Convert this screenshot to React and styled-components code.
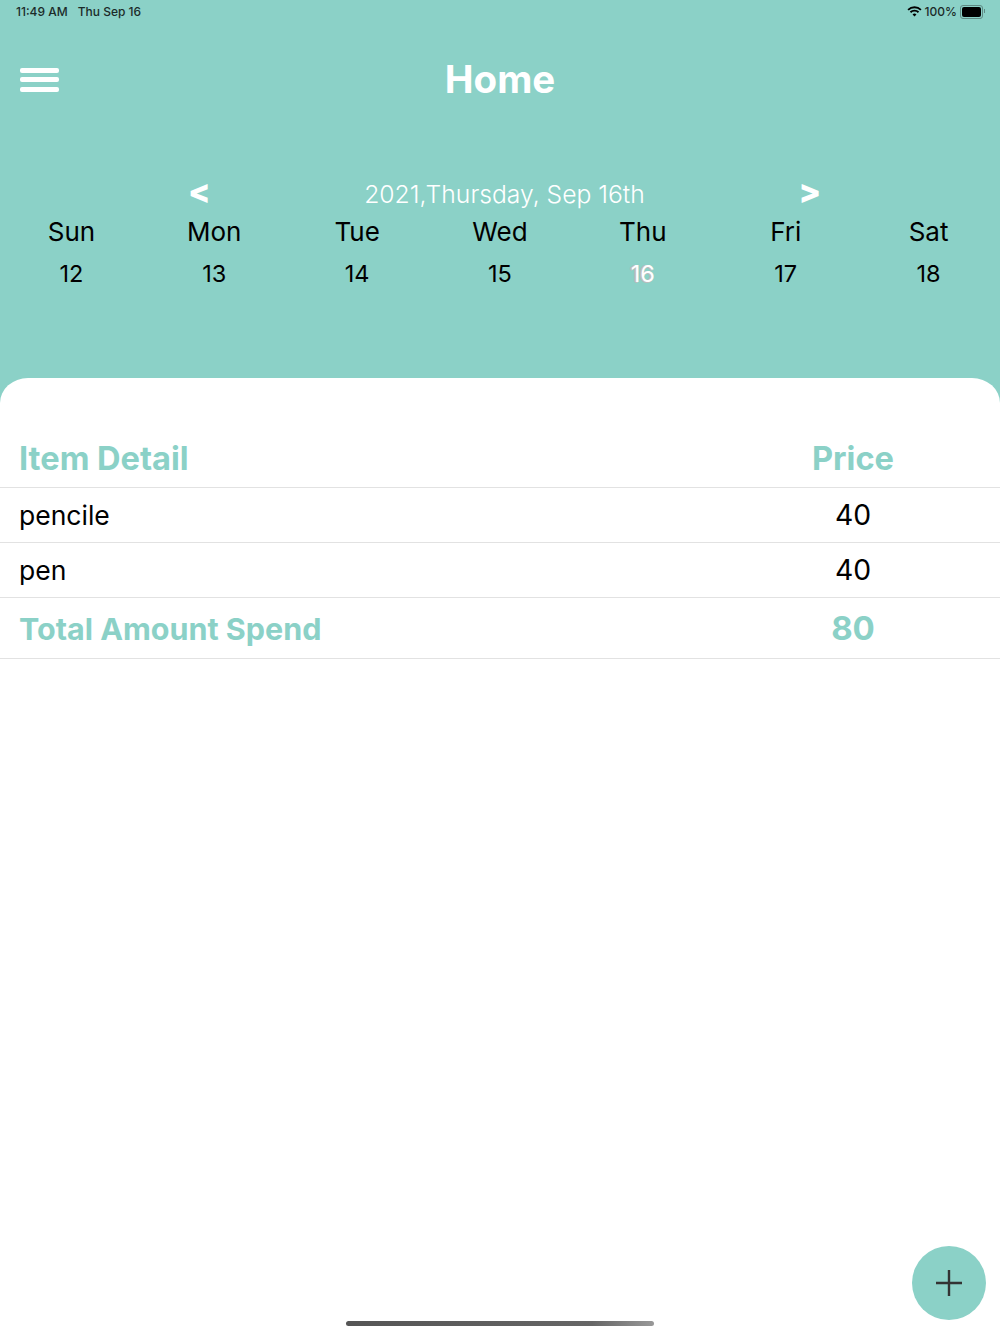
import React from "react";
import styled, { createGlobalStyle } from "styled-components";

const TEAL = "#8bd1c7";

const GlobalStyle = createGlobalStyle`
  html, body {
    margin: 0;
    padding: 0;
    background: ${TEAL};
  }
  body {
    font-family: Inter, "Liberation Sans", sans-serif;
  }
`;

const Page = styled.div`
  position: relative;
  width: 1000px;
  height: 1334px;
  overflow: hidden;
  display: flex;
  flex-direction: column;
  background: ${TEAL};
`;

const StatusBar = styled.div`
  height: 23px;
  padding: 0 16px;
  display: flex;
  align-items: center;
  justify-content: space-between;
  font-size: 12px;
  font-weight: 500;
  color: #1c2b29;
`;

const StatusGroup = styled.div`
  display: flex;
  align-items: center;
  gap: ${(props) => props.$gap}px;
`;

const Battery = styled.div`
  position: relative;
  width: 19px;
  height: 10px;
  padding: 1px;
  border: 1px solid #5f8a84;
  border-radius: 3px;
  margin-right: 1px;

  &::before {
    content: "";
    display: block;
    height: 100%;
    background: #000;
    border-radius: 2px;
  }

  &::after {
    content: "";
    position: absolute;
    right: -3px;
    top: 3px;
    width: 1px;
    height: 4px;
    background: #5f8a84;
  }
`;

const Header = styled.header`
  height: 113px;
  padding: 0 20px;
  display: flex;
  align-items: center;
`;

const MenuButton = styled.div`
  width: 39px;
  display: flex;
  flex-direction: column;
  gap: 4.5px;

  span {
    display: block;
    height: 5px;
    border-radius: 2px;
    background: #fff;
  }
`;

const Title = styled.h1`
  flex: 1;
  margin: 0 39px 2px 0;
  text-align: center;
  font-size: 38.5px;
  font-weight: 700;
  line-height: 48px;
  color: #fff;
`;

const MonthRow = styled.div`
  margin-top: 38px;
  padding: 0 179px 0 188px;
  height: 40px;
  display: flex;
  align-items: center;
  justify-content: space-between;
  color: #fff;
`;

const Arrow = styled.span`
  font-size: 33px;
  font-weight: 800;
  line-height: 34px;
  align-self: flex-start;
`;

const MonthLabel = styled.span`
  font-size: 24.7px;
  font-weight: 300;
`;

const Week = styled.div`
  display: grid;
  grid-template-columns: repeat(7, 1fr);
  text-align: center;
  color: #000;
`;

const DayName = styled.div`
  font-size: 26px;
  line-height: 36px;
`;

const DayNumber = styled.div`
  margin-top: 6px;
  font-size: 23.5px;
  line-height: 36px;
  color: ${(props) => (props.$selected ? "#fff" : "#000")};
  text-shadow: ${(props) =>
    props.$selected ? "-2px 0 0 #bdbdbd, -1px 1px 0 #bdbdbd" : "none"};
`;

const Sheet = styled.main`
  flex: 1;
  margin-top: 86px;
  padding-top: 58px;
  background: #fff;
  border-radius: 28px 28px 0 0 / 25px 25px 0 0;
`;

const Row = styled.div`
  display: grid;
  grid-template-columns: 1fr 294px;
  align-items: center;
  height: ${(props) => props.$height}px;
  padding-left: 19px;
  padding-bottom: ${(props) => props.$lift || 0}px;
  border-bottom: 1px solid #e2e2e2;
  box-sizing: border-box;
`;

const Label = styled.div`
  font-size: ${(props) => props.$size}px;
  font-weight: ${(props) => (props.$accent ? 700 : 400)};
  color: ${(props) => (props.$accent ? TEAL : "#000")};
`;

const Amount = styled(Label)`
  text-align: center;
`;

const AddButton = styled.div`
  position: absolute;
  left: 912px;
  top: 1246px;
  width: 74px;
  height: 74px;
  border-radius: 50%;
  background: ${TEAL};
  display: flex;
  align-items: center;
  justify-content: center;
`;

const HomeIndicator = styled.div`
  position: absolute;
  left: 346px;
  top: 1321px;
  width: 308px;
  height: 5px;
  border-radius: 3px;
  background: linear-gradient(90deg, #555 0%, #666 80%, #999 100%);
`;

const items = [
  { name: "pencile", price: 40 },
  { name: "pen", price: 40 },
];

const days = [
  ["Sun", 12],
  ["Mon", 13],
  ["Tue", 14],
  ["Wed", 15],
  ["Thu", 16],
  ["Fri", 17],
  ["Sat", 18],
];

function WifiIcon() {
  return (
    <svg width="15" height="11" viewBox="0 0 16 12" fill="none" stroke="#000" strokeWidth="2">
      <path d="M1 4.2a10 10 0 0 1 14 0" />
      <path d="M3.6 6.8a6.4 6.4 0 0 1 8.8 0" />
      <path d="M8 11.4 5.9 9.2a3 3 0 0 1 4.2 0z" fill="#000" stroke="none" />
    </svg>
  );
}

export default function App() {
  return (
    <Page>
      <GlobalStyle />
      <StatusBar>
        <StatusGroup $gap={10}>
          <span>11:49 AM</span>
          <span>Thu Sep 16</span>
        </StatusGroup>
        <StatusGroup $gap={3}>
          <WifiIcon />
          <span>100%</span>
          <Battery />
        </StatusGroup>
      </StatusBar>

      <Header>
        <MenuButton>
          <span />
          <span />
          <span />
        </MenuButton>
        <Title>Home</Title>
      </Header>

      <MonthRow>
        <Arrow>&lt;</Arrow>
        <MonthLabel>2021,Thursday, Sep 16th</MonthLabel>
        <Arrow>&gt;</Arrow>
      </MonthRow>

      <Week>
        {days.map(([name, date]) => (
          <div key={name}>
            <DayName>{name}</DayName>
            <DayNumber $selected={date === 16}>{date}</DayNumber>
          </div>
        ))}
      </Week>

      <Sheet>
        <Row $height={52} $lift={8}>
          <Label $accent $size={32.6}>Item Detail</Label>
          <Amount $accent $size={32.6}>Price</Amount>
        </Row>
        {items.map((item) => (
          <Row key={item.name} $height={55}>
            <Label $size={26.5}>{item.name}</Label>
            <Amount $size={28.3}>{item.price}</Amount>
          </Row>
        ))}
        <Row $height={61}>
          <Label $accent $size={30.5}>Total Amount Spend</Label>
          <Amount $accent $size={33}>80</Amount>
        </Row>
      </Sheet>

      <AddButton>
        <svg width="28" height="28" viewBox="0 0 28 28" stroke="#333" strokeWidth="2.4">
          <path d="M14 1v26M1 14h26" />
        </svg>
      </AddButton>
      <HomeIndicator />
    </Page>
  );
}
